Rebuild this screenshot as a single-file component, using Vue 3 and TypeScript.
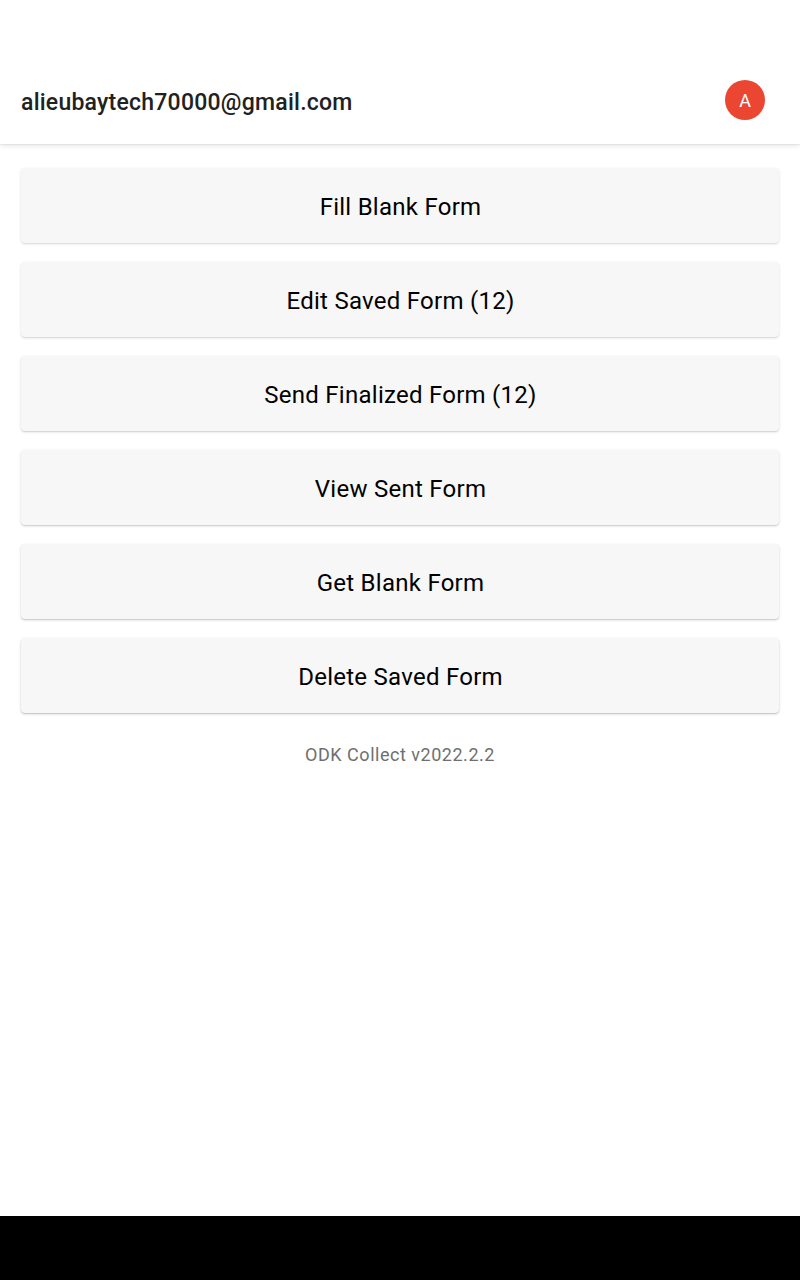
<script setup lang="ts">
const actions: string[] = [
  'Fill Blank Form',
  'Edit Saved Form (12)',
  'Send Finalized Form (12)',
  'View Sent Form',
  'Get Blank Form',
  'Delete Saved Form',
]

// Elevation shadows deepen slightly further down the screen.
const shadowFor = (index: number): string =>
  `0 1px 1px rgba(0, 0, 0, ${(0.05 + index * 0.014).toFixed(3)}), 0 1px 3px rgba(0, 0, 0, ${(0.12 + index * 0.01).toFixed(3)})`
</script>

<template>
  <div class="screen">
    <header class="bar">
      <h1 class="account">alieubaytech70000@gmail.com</h1>
      <div class="avatar">A</div>
    </header>
    <main class="menu">
      <button
        v-for="(action, index) in actions"
        :key="action"
        class="action"
        :style="{ boxShadow: shadowFor(index) }"
      >{{ action }}</button>
      <p class="version">ODK Collect v2022.2.2</p>
    </main>
    <div class="navigation"></div>
  </div>
</template>

<style>
body {
  margin: 0;
}
</style>

<style scoped>
.screen {
  display: flex;
  flex-direction: column;
  width: 800px;
  height: 1280px;
  overflow: hidden;
  background: #fff;
  font-family: Roboto, sans-serif;
}
.bar {
  box-sizing: border-box;
  display: flex;
  justify-content: space-between;
  height: 144px;
  padding: 80px 35px 0 21px;
  box-shadow: 0 1px 1px rgba(0, 0, 0, 0.04), 0 1px 6px rgba(0, 0, 0, 0.13);
}
.account {
  margin: 9px 0 0;
  font-size: 23px;
  line-height: 28px;
  font-weight: 500;
  letter-spacing: 0.24px;
  color: #212121;
}
.avatar {
  width: 40px;
  height: 40px;
  border-radius: 50%;
  background: #eb4632;
  color: #fff;
  font-size: 18px;
  line-height: 42px;
  text-align: center;
}
.menu {
  display: flex;
  flex: 1;
  flex-direction: column;
  gap: 19px;
  padding: 24px 21px 0;
}
.action {
  height: 75px;
  padding: 2px 0 0 1px;
  border: 0;
  border-radius: 4px;
  background: #f7f7f7;
  color: #000;
  font: 400 24px/28px Roboto, sans-serif;
  letter-spacing: 0.26px;
}
.version {
  margin: 12px 0 0;
  color: #6f6f6f;
  font-size: 18px;
  line-height: 22px;
  letter-spacing: 0.52px;
  text-align: center;
}
.navigation {
  height: 64px;
  background: #000;
}
</style>
